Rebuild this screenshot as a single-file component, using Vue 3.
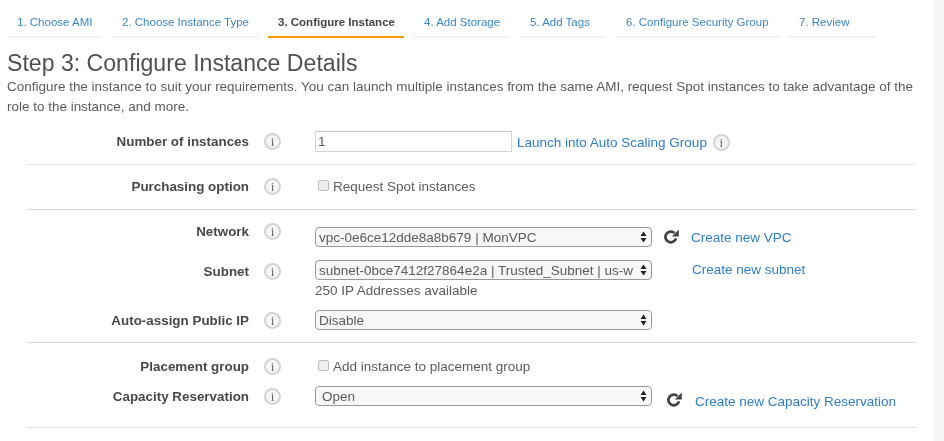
<template>
  <div class="page">
    <div class="main">
      <div class="tabs">
        <a v-for="(tab, index) in tabs" :key="index" class="tab" :class="{ active: index === 2 }" :style="{ width: tab.width + 'px' }">{{ tab.name }}</a>
      </div>
      <h1>Step 3: Configure Instance Details</h1>
      <p class="intro">Configure the instance to suit your requirements. You can launch multiple instances from the same AMI, request Spot instances to take advantage of the role to the instance, and more.</p>

      <div class="section first">
        <div class="row">
          <label>Number of instances</label>
          <span class="info">i</span>
          <div class="field number">
            <input class="text-input" type="text" value="1">
            <a class="link scaling">Launch into Auto Scaling Group</a>
            <span class="info small-gap">i</span>
          </div>
        </div>
      </div>

      <div class="section second">
        <div class="row">
          <label>Purchasing option</label>
          <span class="info">i</span>
          <div class="field check">
            <span class="box"></span>
            <span>Request Spot instances</span>
          </div>
        </div>
      </div>

      <div class="section third">
        <div class="row network">
          <label>Network</label>
          <span class="info">i</span>
          <div class="field offset">
            <div class="select-wrap">
              <select><option>vpc-0e6ce12dde8a8b679 | MonVPC</option></select>
              <svg class="arrows" width="7" height="12" viewBox="0 0 7 12"><path d="M3.5 0.5 6.5 5H.5zM3.5 11.5 .5 7h6z" fill="#222"/></svg>
            </div>
            <svg class="refresh" width="18" height="18" viewBox="0 0 18 18"><path d="M14 10.4A5.4 5.4 0 1 1 12.5 5" fill="none" stroke="#444" stroke-width="2.8"/><path d="M16.8 1.4V8.4H9.8z" fill="#444"/></svg>
            <a class="link vpc">Create new VPC</a>
          </div>
        </div>
        <div class="row subnet">
          <label>Subnet</label>
          <span class="info">i</span>
          <div class="field column">
            <div class="field">
              <div class="select-wrap">
                <select><option>subnet-0bce7412f27864e2a | Trusted_Subnet | us-w</option></select>
                <svg class="arrows" width="7" height="12" viewBox="0 0 7 12"><path d="M3.5 0.5 6.5 5H.5zM3.5 11.5 .5 7h6z" fill="#222"/></svg>
              </div>
              <a class="link subnet-link">Create new subnet</a>
            </div>
            <div class="help">250 IP Addresses available</div>
          </div>
        </div>
        <div class="row public-ip">
          <label>Auto-assign Public IP</label>
          <span class="info">i</span>
          <div class="field">
            <div class="select-wrap">
              <select><option>Disable</option></select>
              <svg class="arrows" width="7" height="12" viewBox="0 0 7 12"><path d="M3.5 0.5 6.5 5H.5zM3.5 11.5 .5 7h6z" fill="#222"/></svg>
            </div>
          </div>
        </div>
      </div>

      <div class="section fourth">
        <div class="row">
          <label>Placement group</label>
          <span class="info">i</span>
          <div class="field check">
            <span class="box"></span>
            <span>Add instance to placement group</span>
          </div>
        </div>
        <div class="row capacity">
          <label>Capacity Reservation</label>
          <span class="info">i</span>
          <div class="field">
            <div class="select-wrap">
              <select class="open"><option>Open</option></select>
              <svg class="arrows" width="7" height="12" viewBox="0 0 7 12"><path d="M3.5 0.5 6.5 5H.5zM3.5 11.5 .5 7h6z" fill="#222"/></svg>
            </div>
            <svg class="refresh low" width="18" height="18" viewBox="0 0 18 18"><path d="M14 10.4A5.4 5.4 0 1 1 12.5 5" fill="none" stroke="#444" stroke-width="2.8"/><path d="M16.8 1.4V8.4H9.8z" fill="#444"/></svg>
            <a class="link capacity-link">Create new Capacity Reservation</a>
          </div>
        </div>
      </div>
    </div>
    <div class="strip"></div>
  </div>
</template>

<script setup>
const tabs = [
  { name: '1. Choose AMI', width: 95 },
  { name: '2. Choose Instance Type', width: 146 },
  { name: '3. Configure Instance', width: 136 },
  { name: '4. Add Storage', width: 96 },
  { name: '5. Add Tags', width: 86 },
  { name: '6. Configure Security Group', width: 163 },
  { name: '7. Review', width: 87 }
];
</script>

<style>
html, body {
  margin: 0;
  background: #fff;
  overflow: hidden;
}
</style>

<style scoped>
.page {
  display: flex;
  width: 944px;
  height: 441px;
  overflow: hidden;
  font-family: "Liberation Sans", Arial, sans-serif;
  font-size: 13.5px;
  color: #5c5c5c;
  filter: blur(0.4px);
}

.main {
  width: 934px;
  flex: none;
}

.strip {
  flex: 1;
  background: #f6f6f6;
}

.tabs {
  display: flex;
  gap: 10px;
  margin: 8px 0 0 7px;
}

.tab {
  box-sizing: border-box;
  flex: none;
  padding: 7px 0 7px 10px;
  font-size: 11.5px;
  line-height: 14px;
  white-space: nowrap;
  color: #3a87c8;
  border-bottom: 2px solid #f2f2f2;
}

.tab.active {
  color: #444;
  font-weight: bold;
  border-bottom-color: #f90;
}

h1 {
  margin: 12px 0 0 7px;
  font-size: 23.1px;
  line-height: 27px;
  font-weight: normal;
  color: #505050;
}

.intro {
  margin: 0 0 0 7px;
  width: 915px;
  font-size: 13.48px;
  line-height: 20px;
}

.section {
  margin-left: 27px;
  width: 889px;
  border-bottom: 1px solid #ddd;
}

.first {
  padding: 13px 0 10px;
  border-bottom-color: #e8e8e8;
}

.second {
  padding: 10px 0 10px;
  border-bottom-color: #d8d8d8;
}

.third {
  padding: 12px 0 8px;
  border-bottom-color: #d8d8d8;
}

.fourth {
  padding: 12px 0 18px;
}

.row {
  display: flex;
  align-items: flex-start;
}

.row label {
  flex: none;
  width: 222px;
  text-align: right;
  font-weight: bold;
  font-size: 13.4px;
  line-height: 24px;
  color: #484848;
}

.info {
  flex: none;
  width: 13px;
  height: 13px;
  margin: 3px 34px 0 15px;
  border: 2px solid #d2d2d2;
  border-radius: 50%;
  background: #f6f6f6;
  font-family: "Liberation Serif", serif;
  font-size: 13px;
  line-height: 13px;
  text-align: center;
  color: #666;
}

.info.small-gap {
  margin: 2px 0 0 6px;
}

.field {
  display: flex;
  align-items: center;
}

.number {
  margin-top: 1px;
}

.column {
  flex-direction: column;
  align-items: flex-start;
}

.text-input {
  box-sizing: border-box;
  width: 197px;
  height: 21px;
  padding: 0 2px;
  border: 1px solid #d4d4d4;
  border-top-color: #c4c4c4;
  font: 13.5px "Liberation Sans", Arial, sans-serif;
  color: #5c5c5c;
  outline: none;
}

.check {
  padding-left: 3px;
  line-height: 24px;
}

.box {
  width: 9px;
  height: 9px;
  margin-right: 4px;
  margin-top: -3px;
  border: 1px solid #bbb;
  border-radius: 2px;
  background: #eee;
}

.select-wrap {
  position: relative;
  width: 337px;
  height: 20px;
}

select {
  appearance: none;
  box-sizing: border-box;
  display: block;
  width: 100%;
  height: 100%;
  padding: 0 14px 0 3px;
  border: 1px solid #999;
  border-radius: 4px;
  background: #f7f7f7;
  font: 13.5px "Liberation Sans", Arial, sans-serif;
  color: #5c5c5c;
  outline: none;
}

select.open {
  padding-left: 6px;
}

.arrows {
  position: absolute;
  top: 4px;
  right: 5px;
}

.refresh {
  flex: none;
  margin-left: 10px;
}

.refresh.low {
  margin-left: 13px;
  margin-top: 8px;
}

.link {
  color: #2e7ec9;
  white-space: nowrap;
}

.scaling {
  margin: 1px 0 0 5px;
}

.vpc {
  margin: 0 0 0 11px;
}

.subnet-link {
  margin: -1px 0 0 40px;
}

.capacity-link {
  margin: 10px 0 0 12px;
}

.network {
  height: 38px;
}

.network label,
.network .info {
  position: relative;
  top: -2px;
}

.network .offset {
  margin-top: 5px;
}

.subnet {
  height: 50px;
}

.help {
  margin-top: 3px;
  line-height: 16px;
}

.public-ip label,
.public-ip .info {
  position: relative;
  top: -1px;
}

.capacity {
  margin-top: 4px;
}

.capacity label,
.capacity .info {
  position: relative;
  top: 2px;
}
</style>
